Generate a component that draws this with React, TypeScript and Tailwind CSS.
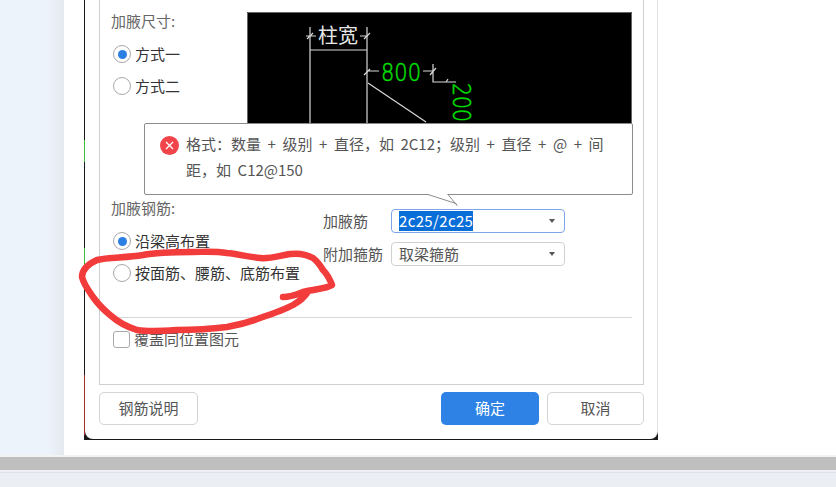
import React from 'react';

const font = { fontFamily: '"Noto Sans CJK SC", "Noto Sans", sans-serif' };
const cad = { fontFamily: '"DejaVu Sans", sans-serif', fontWeight: 200 };

const Radio = ({ checked, label }: { checked?: boolean; label: string }) => (
  <div className="flex items-center gap-[4px] h-[18px] ml-px">
    <span className="w-[18px] h-[18px] rounded-full border-[1.5px] border-[#a8a8a8] bg-white flex items-center justify-center">
      {checked && <span className="w-[9px] h-[9px] rounded-full bg-[#2b7fe3]" />}
    </span>
    <span className="text-[15px] leading-[18px] text-[#333]">{label}</span>
  </div>
);

const Select = ({ value, active }: { value: string; active?: boolean }) => (
  <div className={`w-[174px] h-[24px] rounded-[4px] border bg-white flex items-center justify-between pl-[7px] pr-[9px] ${active ? 'border-[#7da6e8]' : 'border-[#d0d0d0]'}`}>
    <span className={`text-[15px] leading-[20px] ${active ? 'bg-[#0a6ed8] text-white tracking-[0.35px]' : 'text-[#555]'}`}>{value}</span>
    <span className="w-0 h-0 border-x-[3px] border-x-transparent border-t-[4px] border-t-[#555]" />
  </div>
);

const Diagram = () => (
  <svg width="385" height="178" viewBox="247 12 385 178" className="block shrink-0">
    <rect x="247" y="12" width="385" height="178" fill="#000" />
    <path d="M247.5 190V12.5H631.5V190" stroke="#666" fill="none" />
    <g stroke="#d8d8d8" strokeWidth="1.2" fill="none">
      <path d="M310 27V190M367 27V190M310 50H367" />
      <path d="M306 36H316M360 36H367M307 39L313 33M364 39L370 33" />
      <path d="M368 83L426 122" />
      <path d="M367 71H379M423 71H433M433 64V82H456M364 75L370 69M430 75L436 68M446 82L448 79" />
    </g>
    <text x="318" y="43" fontSize="20" fill="#e8e8e8" style={font}>柱宽</text>
    <text x="381" y="81" fontSize="25" fill="#00e000" stroke="#00e000" strokeWidth="0.5" textLength="40" lengthAdjust="spacingAndGlyphs" style={cad}>800</text>
    <text x="0" y="0" fontSize="25" fill="#00e000" stroke="#00e000" strokeWidth="0.5" textLength="39" lengthAdjust="spacingAndGlyphs" transform="translate(453 83) rotate(90)" style={cad}>200</text>
  </svg>
);

export default function App() {
  return (
    <div className="w-[836px] h-[487px] overflow-hidden flex flex-col bg-white relative" style={font}>
      <div className="flex h-[455px]">
        <div className="w-[64px] bg-linear-to-r from-[#ecf3fb] from-75% to-[#e5e9ee]" />
        <div className="flex-1 pl-[20px]">
          {/* dialog, top is cut off by the screenshot */}
          <div className="relative w-[574px] h-[440px] bg-[#1a1a1a] pl-px pb-px">
            <span className="absolute left-0 top-[140px] w-px h-[22px] bg-[#3fbf3f]" />
            <span className="absolute left-0 top-[248px] w-px h-[22px] bg-[#3fbf3f]" />
            <span className="absolute left-0 top-[375px] w-px h-[60px] bg-[#a03030]" />
            <div className="h-full bg-white rounded-b-[8px] border-r border-[#e2e2e2] pl-[14px] pr-[13px] flex flex-col">
              <div className="h-[385px] border-x border-b border-[#cfcfcf] pl-[12px] pr-[11px] flex flex-col">
                <div className="flex h-[190px] pt-[12px]">
                  <div className="w-[135px] shrink-0">
                    <div className="text-[15px] leading-[20px] text-[#666] -mt-px -ml-px">加腋尺寸:</div>
                    <div className="mt-[14px] flex flex-col gap-[14px]">
                      <Radio checked label="方式一" />
                      <Radio label="方式二" />
                    </div>
                  </div>
                  <Diagram />
                </div>
                <div className="flex h-[114px]">
                  <div className="w-[211px] shrink-0">
                    <div className="text-[15px] leading-[20px] text-[#666] -ml-px mt-[8px]">加腋钢筋:</div>
                    <div className="mt-[14px] flex flex-col gap-[14px]">
                      <Radio checked label="沿梁高布置" />
                      <Radio label="按面筋、腰筋、底筋布置" />
                    </div>
                  </div>
                  <div className="pt-[19px] flex flex-col gap-[9px]">
                    <div className="flex items-center">
                      <span className="w-[68px] text-[15px] text-[#555]">加腋筋</span>
                      <Select value="2c25/2c25" active />
                    </div>
                    <div className="flex items-center">
                      <span className="w-[68px] text-[15px] text-[#555]">附加箍筋</span>
                      <Select value="取梁箍筋" />
                    </div>
                  </div>
                </div>
                <div className="h-[14px] border-b border-[#d8d8d8] ml-px" />
                <div className="flex items-center gap-[4px] mt-[12px] ml-px">
                  <span className="w-[17px] h-[17px] rounded-[3px] border border-[#a8a8a8] bg-white" />
                  <span className="text-[15px] leading-[18px] text-[#555]">覆盖同位置图元</span>
                </div>
              </div>
              <div className="flex items-center justify-between mt-[7px]">
                <button className="w-[99px] h-[33px] rounded-[5px] border border-[#d4d4d4] bg-white text-[15px] text-[#555]">钢筋说明</button>
                <div className="flex gap-[8px]">
                  <button className="w-[98px] h-[33px] rounded-[5px] bg-[#2e82e5] text-[15px] text-white">确定</button>
                  <button className="w-[97px] h-[33px] rounded-[5px] border border-[#d4d4d4] bg-white text-[15px] text-[#555]">取消</button>
                </div>
              </div>
            </div>
          </div>
        </div>
      </div>
      <div className="h-[2px] bg-[#f3f3f3]" />
      <div className="h-[13px] bg-[#bfbfbf]" />
      <div className="h-[2px] bg-[#eef0f5]" />
      <div className="flex-1 bg-[#ebeef3] border-t border-[#dfe2e8]" />

      {/* validation tooltip */}
      <div className="absolute left-[144px] top-[123px] w-[489px] h-[72px] bg-white border border-[#8c8c8c] rounded-[2px] pl-[15px] pt-[7px] flex gap-[7px]">
        <span className="w-[19px] h-[19px] mt-[5px] shrink-0 rounded-full bg-[#f0434a] flex items-center justify-center">
          <svg width="11" height="11" viewBox="0 0 11 11"><path d="M2 2L9 9M9 2L2 9" stroke="#fff" strokeWidth="1.3" /></svg>
        </span>
        <div className="text-[15px] leading-[26px] text-[#555] whitespace-nowrap [word-spacing:3.2px]">
          {'格式\uFF1A数量 + 级别 + 直径\uFF0C如 2C12\uFF1B级别 + 直径 + @ + 间'}<br />{'距\uFF0C如 C12@150'}
        </div>
        <svg width="30" height="14" viewBox="0 0 30 14" className="absolute left-[283px] top-[69px]">
          <path d="M1 1H19.5V2.5L28 10L1 2Z" fill="#fff" />
          <path d="M0 1.5L28 10.5L29 12.5L20 1.5" fill="none" stroke="#8c8c8c" />
        </svg>
      </div>

      {/* red hand-drawn annotation */}
      <svg width="836" height="487" className="absolute inset-0 pointer-events-none">
        <path d="M283 297C292 297 298 294 303 292C314 289 326 289 332 285C329 277 327 274 323 270C320 265 317 261 313 258C306 254 298 253 290 254C278 256 270 259 260 258C248 257 238 254 227 253C214 251 204 252 193 252C175 252 158 252 143 255C126 258 108 257 97 260C88 264 82 270 82 277C84 285 89 291 93 297C98 304 104 310 110 315C118 322 127 327 137 330C150 332 163 331 177 330C195 330 211 329 227 327C239 325 250 322 260 318C272 314 284 310 293 305C298 302 302 300 307 293"
          fill="none" stroke="#f23b3b" strokeWidth="6.5" strokeLinecap="round" strokeLinejoin="round" />
      </svg>
    </div>
  );
}
